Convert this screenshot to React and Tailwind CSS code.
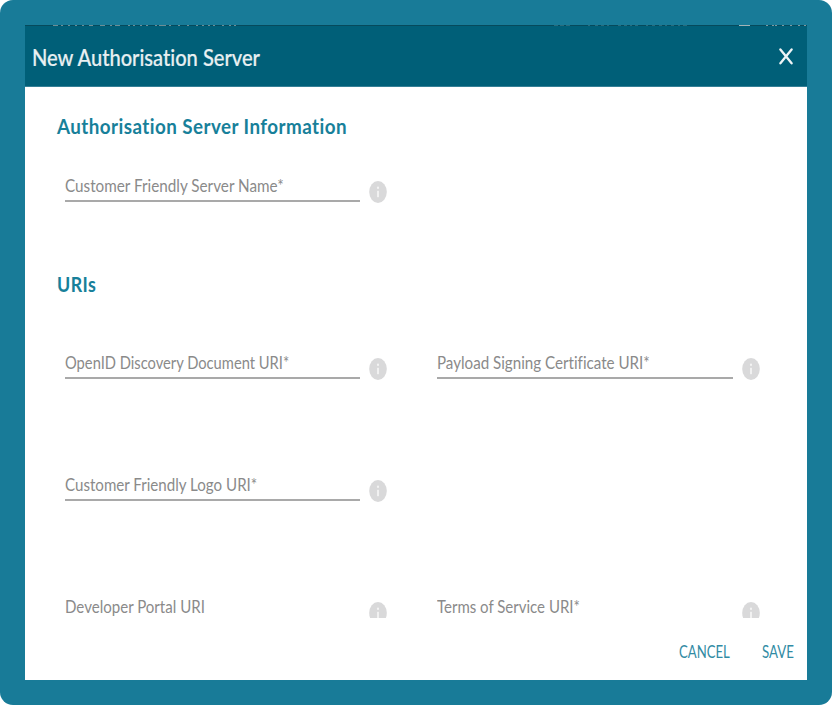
import { useLayoutEffect, useRef, useState } from "react";

// Condenses its text horizontally so that it spans the given width.
function Condensed({ width, className = "", children }) {
  const ref = useRef(null);
  const [scale, setScale] = useState(1);
  useLayoutEffect(() => {
    setScale(width / ref.current.offsetWidth);
  }, [width]);
  return (
    <span className="block" style={{ width }}>
      <span
        ref={ref}
        className={`inline-block origin-left whitespace-nowrap ${className}`}
        style={{ transform: `scaleX(${scale})` }}
      >
        {children}
      </span>
    </span>
  );
}

function InfoIcon() {
  return (
    <svg
      viewBox="0 0 18 22"
      className="mt-[17.4px] ml-[9.4px] h-[22px] w-[18px] shrink-0"
      aria-hidden="true"
    >
      <ellipse cx="9" cy="11" rx="8.8" ry="10.9" fill="#d9d9da" />
      <ellipse cx="9" cy="6.7" rx="1.1" ry="1.2" fill="#fff" fillOpacity="0.7" />
      <rect x="8.1" y="9.8" width="1.8" height="6.4" fill="#fff" fillOpacity="0.7" />
    </svg>
  );
}

function Field({ label, width, wide = false }) {
  return (
    <div className="flex h-[62px] w-[372px] items-start">
      <div
        className={`h-[38px] shrink-0 border-b-2 border-[#a9a9a9] pt-[10px] text-[17px] leading-6 text-[#8a8a8a] ${
          wide ? "w-[296px]" : "w-[295px]"
        }`}
      >
        <Condensed width={width}>{label}</Condensed>
      </div>
      <InfoIcon />
    </div>
  );
}

function SectionTitle({ width, children }) {
  return (
    <h2 className="pl-[32px] text-[21px] leading-7 font-bold text-[#17809a]">
      <Condensed width={width} className="tracking-[0.5px]">
        {children}
      </Condensed>
    </h2>
  );
}

// Bottom edge of the page's own title bar: [gap before, length] of each speck.
const titleSpecks = [
  [28, 5], [3, 2], [5, 2], [5, 2], [5, 2], [5, 4], [7, 5], [5, 2], [3, 5], [8, 2],
  [3, 2], [5, 2], [4, 2], [7, 2], [2, 7], [3, 2], [7, 2], [7, 2], [7, 2], [4, 2],
  [4, 2], [3, 2], [7, 2], [5, 2], [3, 2],
];
const navSpecks = [
  [0, 4], [2, 4], [2, 4], [18, 2], [5, 3], [3, 3], [3, 2], [9, 3], [3, 3], [3, 2],
  [3, 3], [8, 2], [4, 3], [4, 3], [3, 2], [4, 3], [4, 2], [3, 4],
];
const userSpecks = [
  [0, 2], [4, 2], [1, 2], [5, 2], [6, 2], [6, 2], [4, 2],
];

function Specks({ items, className }) {
  return (
    <div className="flex">
      {items.map(([gap, length], i) => (
        <div
          key={i}
          className={`h-px shrink-0 ${className}`}
          style={{ marginLeft: gap, width: length }}
        />
      ))}
    </div>
  );
}

export default function App() {
  return (
    <div className="h-[705px] w-[832px] overflow-hidden rounded-[13px] bg-[#187b98] p-[25px] font-['Lato','Open_Sans',sans-serif] [font-variant-ligatures:none]">
      <div className="flex h-[655px] w-[782px] flex-col overflow-hidden bg-white">
        <header className="h-[62px] shrink-0 border-b border-[#357f96] bg-[#005f78]">
          <div className="flex h-px overflow-hidden bg-[#064a5c]">
            <div className="w-[529px] shrink-0">
              <Specks items={titleSpecks} className="bg-[#6e8d94]" />
            </div>
            <div className="w-[185px] shrink-0">
              <Specks items={navSpecks} className="bg-[#2a6b7c]" />
            </div>
            <div className="h-px w-[11px] shrink-0 bg-[#a3b3b6]" />
            <div className="pl-[16px]">
              <Specks items={userSpecks} className="bg-[#7f999f]" />
            </div>
          </div>
          <div className="flex items-start justify-between pt-[15px] pr-[14px] pl-[7px]">
            <h1 className="text-[23px] leading-8 font-medium text-[#e9f0f2] [-webkit-text-stroke:0.2px_#e9f0f2]">
              <Condensed width={228}>New Authorisation Server</Condensed>
            </h1>
            <button className="mt-[7px]" aria-label="Close">
              <svg
                viewBox="0 0 14 17"
                className="h-[17px] w-[14px]"
                fill="none"
                stroke="#eef4f6"
                strokeWidth="2.3"
                strokeLinecap="round"
              >
                <path d="M1.4 1.5 12.6 15.3M12.6 1.5 1.4 15.3" />
              </svg>
            </button>
          </div>
        </header>
        <main className="h-[531px] shrink-0 overflow-hidden pt-[25px]">
          <SectionTitle width={290}>Authorisation Server Information</SectionTitle>
          <div className="pt-[24px] pl-[40px]">
            <Field label="Customer Friendly Server Name*" width={219} />
          </div>
          <div className="pt-[44px]">
            <SectionTitle width={39}>URIs</SectionTitle>
          </div>
          <div className="grid grid-cols-[372px_372px] gap-y-[60px] pt-[43px] pl-[40px]">
            <Field label="OpenID Discovery Document URI*" width={224} />
            <Field label="Payload Signing Certificate URI*" width={213} wide />
            <Field label="Customer Friendly Logo URI*" width={192} />
            <div />
            <Field label="Developer Portal URI" width={140} />
            <Field label="Terms of Service URI*" width={143} wide />
          </div>
        </main>
        <footer className="flex grow items-start justify-end gap-[32px] pt-[22px] pr-[13px] text-[17px] leading-6 text-[#318ba4]">
          <button className="text-left">
            <Condensed width={51}>CANCEL</Condensed>
          </button>
          <button className="text-left">
            <Condensed width={32}>SAVE</Condensed>
          </button>
        </footer>
      </div>
    </div>
  );
}
